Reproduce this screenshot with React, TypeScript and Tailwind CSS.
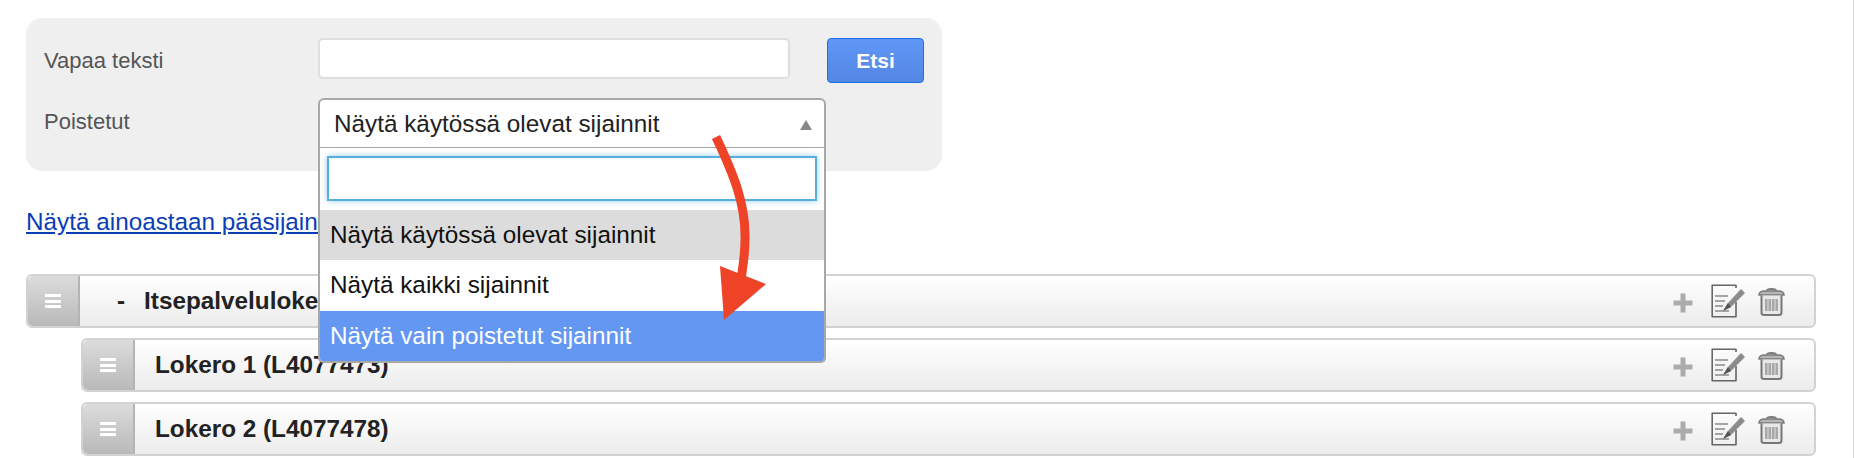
const font = "font-['Liberation_Sans',Arial,sans-serif]";

function Handle() {
  return (
    <div className="flex h-full w-[52px] shrink-0 flex-col items-center justify-center gap-[2.5px] rounded-l-[5px] border-r-2 border-[#b4b4b4] bg-gradient-to-b from-[#dcdcdc] to-[#b9b9b9]">
      <span className="h-[3px] w-[16px] bg-white" />
      <span className="h-[3px] w-[16px] bg-white" />
      <span className="h-[3px] w-[16px] bg-white" />
    </div>
  );
}

function RowIcons() {
  return (
    <div className="ml-auto mr-[29px] flex items-center gap-[11px]">
      <svg width="22" height="22" viewBox="0 0 22 22" className="mt-[3px] mr-[6px]">
        <path d="M11 1.5v19M1.5 11h19" stroke="#ababab" strokeWidth="5" />
      </svg>
      <svg width="36" height="34" viewBox="0 0 36 34" fill="none">
        <path d="M25 4V1.2H1.2v31.6H25V18" stroke="#666" strokeWidth="1.6" strokeLinejoin="round" />
        <path d="M4 12h13M4 17h10M4 22h8M4 27h14" stroke="#8a8a8a" strokeWidth="1.6" />
        <path d="M12 27l5-8L30 5l4 4-14 14z" fill="#8c8c8c" />
        <path d="M12 27l5-8 3 4z" fill="#555" />
      </svg>
      <svg width="27" height="29" viewBox="0 0 27 29" fill="none">
        <path d="M9 3.5C9 1.5 18 1.5 18 3.5" stroke="#777" strokeWidth="2" />
        <path d="M1 8c0-3 3-4 5-4h15c2 0 5 1 5 4z" fill="#b5b5b5" stroke="#777" strokeWidth="1.5" />
        <path d="M3.5 8.5v17c0 1.5 1 2.5 2.5 2.5h15c1.500 0 2.500-1 2.500-2.500v-17" stroke="#777" strokeWidth="2" fill="#e8e8e8" />
        <path d="M7 12h13v12H7z" fill="#a8a8a8" />
        <path d="M10 12v12M13.500 12v12M17 12v12" stroke="#ddd" strokeWidth="1" />
      </svg>
    </div>
  );
}

function Row({ text, prefix, indent }: { text: string; prefix?: string; indent?: boolean }) {
  return (
    <div className={`flex h-[54px] items-center rounded-[6px] border-2 border-[#d2d2d2] bg-gradient-to-b from-white to-[#ececec] ${indent ? 'ml-[55px]' : ''}`}>
      <Handle />
      {prefix ? (
        <>
          <span className="ml-[37px] text-[24.3px] font-bold text-[#222]">{prefix}</span>
          <span className="ml-[19px] text-[24.3px] font-bold text-[#222]">{text}</span>
        </>
      ) : (
        <span className="ml-[20px] text-[24.3px] font-bold text-[#222]">{text}</span>
      )}
      <RowIcons />
    </div>
  );
}

export default function App() {
  return (
    <div className={`${font} relative h-[458px] w-full overflow-hidden border-r border-[#dcdcdc] bg-white pl-[26px] pr-[37px] pt-[18px]`}>
      {/* Search form */}
      <div className="h-[153px] w-[916px] rounded-[16px] bg-[#efefef] pl-[18px] pr-[18px] pt-[20px]">
        <div className="flex items-start">
          <label className="mt-[12px] w-[274px] text-[22px] leading-[22px] text-[#555]">Vapaa teksti</label>
          <input className="h-[41px] w-[472px] rounded-[5px] border-2 border-[#dedede] bg-white" />
          <button className="ml-[37px] h-[45px] w-[97px] rounded-[4px] border border-[#1c6fe8] bg-gradient-to-b from-[#6097f7] to-[#5486e3] text-[21px] font-bold text-white">
            Etsi
          </button>
        </div>
        <div className="mt-[15px] flex items-start">
          <label className="mt-[13px] w-[274px] text-[22px] leading-[22px] text-[#555]">Poistetut</label>
          <div className="relative z-10 w-[508px]">
            <div className="flex h-[51px] items-center rounded-t-[6px] border-2 border-[#a8a8a8] bg-white pl-[14px] pr-[12px] pt-[2px] text-[24.3px] text-[#222]">
              Näytä käytössä olevat sijainnit
              <span className="ml-auto h-0 w-0 border-x-[6.500px] border-b-[10px] border-x-transparent border-b-[#888]" />
            </div>
            {/* Open dropdown */}
            <div className="absolute left-0 right-0 top-[50px] rounded-b-[5px] border-x-2 border-b-2 border-[#a8a8a8] bg-white">
              <div className="px-[7px] pb-[9px] pt-[8px]">
                <div className="h-[45px] border-2 border-[#58aedb] bg-white shadow-[0_0_6px_rgba(82,168,236,0.6)]" />
              </div>
              <div className="flex h-[50px] items-center bg-[#dcdcdc] pl-[10px] text-[24.3px] text-[#111]">Näytä käytössä olevat sijainnit</div>
              <div className="flex h-[51px] items-center bg-white pl-[10px] text-[24.3px] text-[#111]">Näytä kaikki sijainnit</div>
              <div className="flex h-[50px] items-center rounded-b-[3px] bg-[#6397f2] pl-[10px] pt-[1px] text-[24.3px] text-white">Näytä vain poistetut sijainnit</div>
            </div>
          </div>
        </div>
      </div>

      <a href="#" className="mt-[38px] block w-fit text-[24.3px] leading-[26px] text-[#0b3db5] underline">
        Näytä ainoastaan pääsijainnit
      </a>

      {/* Location tree */}
      <div className="mt-[39px] flex flex-col gap-[10px]">
        <Row prefix="-" text="Itsepalvelulokerikko (L4077470)" />
        <Row indent text="Lokero 1 (L4077473)" />
        <Row indent text="Lokero 2 (L4077478)" />
      </div>

      {/* Annotation arrow */}
      <svg className="pointer-events-none absolute left-[700px] top-[125px] z-20" width="80" height="200" viewBox="700 125 80 200" fill="none">
        <path d="M716 137C734 175 746 205 745 240C745 255 743 265 741 280" stroke="#ee4327" strokeWidth="9" />
        <path d="M720 266L766 284L724 320Z" fill="#ee4327" />
      </svg>
    </div>
  );
}
